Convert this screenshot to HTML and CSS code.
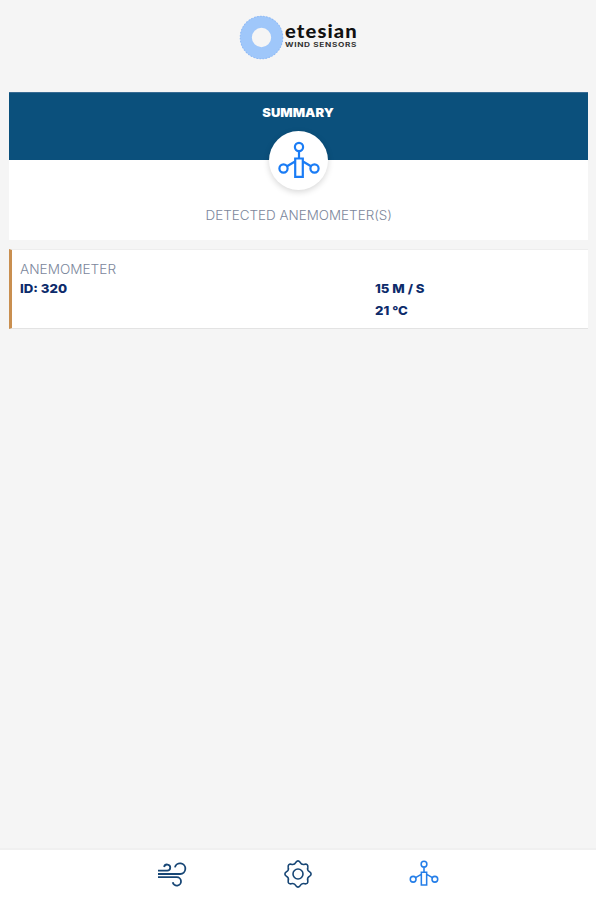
FILE: index.html
```html
<!DOCTYPE html>
<html lang="en">
<head>
<meta charset="utf-8">
<title>Etesian Wind Sensors</title>
<link rel="stylesheet" href="styles.css">
</head>
<body>
<svg class="defs" width="0" height="0" aria-hidden="true">
  <symbol id="anemometer" viewBox="0 0 42 40">
    <g fill="none" stroke="currentColor" stroke-width="2.2">
      <circle cx="21" cy="6" r="4.1"/>
      <circle cx="5.5" cy="27.5" r="4.1"/>
      <circle cx="36.5" cy="27.5" r="4.1"/>
      <path d="M21 10v7M17 20.5l-8 4.7M25 20.5l8 4.7M17.2 17.5h7.6v18.3h-7.6z"/>
    </g>
  </symbol>
</svg>
<div class="app">
  <header class="brand">
    <svg class="ring" viewBox="0 0 44 44"><circle cx="22" cy="22" r="15.2" fill="none" stroke="#9fc7fa" stroke-width="11.5"/><circle cx="22" cy="22" r="20.8" fill="none" stroke="#8fb9f4" stroke-width="1" stroke-dasharray="1.5 1.5"/></svg>
    <div class="wordmark">
      <span class="name">etesian</span>
      <span class="tagline">WIND SENSORS</span>
    </div>
  </header>
  <main>
    <section class="summary">
      <h1>SUMMARY</h1>
      <div class="badge"><svg><use href="#anemometer"/></svg></div>
      <p><span>DETECTED ANEMOMETER(S)</span></p>
    </section>
    <section class="sensor">
      <div class="identity">
        <span class="label">ANEMOMETER</span>
        <strong class="id">ID: 320</strong>
      </div>
      <div class="readings">
        <strong class="speed">15 M / S</strong>
        <strong class="temp">21 °C</strong>
      </div>
    </section>
  </main>
  <nav>
    <svg viewBox="0 0 30 28" fill="none" stroke="currentColor" stroke-width="1.8">
      <path d="M1 10.7h9.2a3.1 3.1 0 1 0-3.1-3.7M1 14h22.2a5.3 5.3 0 1 0-5.3-6.6M1 17.2h18.8a4.2 4.2 0 1 1-4.1 5.1"/>
    </svg>
    <svg viewBox="0 0 30 28" fill="none" stroke="currentColor" stroke-width="1.6" stroke-linejoin="round">
      <circle cx="15" cy="14" r="5"/>
      <path d="M12.9 2.3Q15 -.5 17.1 2.3Q18.7 5.2 21.8 4.2Q25.2 3.8 24.8 7.2Q23.8 10.3 26.7 11.9Q29.5 14 26.7 16.1Q23.8 17.7 24.8 20.8Q25.2 24.2 21.8 23.8Q18.7 22.8 17.1 25.7Q15 28.5 12.9 25.7Q11.3 22.8 8.2 23.8Q4.8 24.2 5.2 20.8Q6.2 17.7 3.3 16.1Q.5 14 3.3 11.9Q6.2 10.3 5.2 7.2Q4.8 3.8 8.2 4.2Q11.3 5.2 12.9 2.3Z"/>
    </svg>
    <svg class="active"><use href="#anemometer"/></svg>
  </nav>
</div>
</body>
</html>
```
FILE: styles.css
```css
* { box-sizing: border-box; }
body { margin: 0; background: #f5f5f5; font-family: Inter, "Open Sans", sans-serif; }
.defs { position: absolute; }
.app { height: 900px; display: flex; flex-direction: column; }
.brand { height: 92px; padding: 15px 0 0 239px; display: flex; align-items: flex-start; }
.ring { width: 45px; height: 45px; flex: none; }
.wordmark { display: flex; flex-direction: column; align-items: flex-start; padding: 6px 0 0 1px; white-space: nowrap; color: #111; }
.name { font: 900 18px/20px Lato, sans-serif; letter-spacing: 1px; transform: scaleX(1.12); transform-origin: left; }
.tagline { font: 700 6.5px/9px Inter, sans-serif; letter-spacing: .5px; color: #333; transform: scaleX(1.27); transform-origin: left; }
main { flex: 1; padding: 0 8px 0 9px; }
.summary { height: 148px; background: linear-gradient(#0b507c 67px, #fff 67px); border-top: 1px solid #386b93; display: flex; flex-direction: column; align-items: center; }
h1 { margin: 12px 0 0; color: #fff; font-size: 12px; line-height: 16px; font-weight: 900; transform: scaleX(1.08); }
.badge { width: 59px; height: 59px; margin-top: 10px; border-radius: 50%; background: #fff; box-shadow: 0 2px 6px rgba(0,0,0,.16); display: grid; place-items: center; color: #1a7cf5; }
.badge svg { width: 42px; height: 40px; }
p { margin: 17px 0 0; font-size: 12.5px; line-height: 18px; font-weight: 300; color: #7c879c; transform: scaleX(1.075); }
.sensor { height: 80px; margin-top: 9px; padding: 12px 0 0 8px; background: #fff; border-left: 3px solid #c98f50; border-top: 1px solid #ededed; border-bottom: 1px solid #e3e3e3; display: grid; grid-template-columns: 355px 1fr; }
.identity, .readings { display: flex; flex-direction: column; align-items: flex-start; }
.label { font-size: 12.5px; line-height: 16px; font-weight: 300; color: #7c879c; transform: scaleX(1.09); transform-origin: left; }
.id { margin-top: 3px; }
strong { font-size: 12px; line-height: 16px; font-weight: 800; color: #0d2b6b; transform: scaleX(1.1); transform-origin: left; }
.readings { padding-top: 19px; gap: 6px; }
nav { height: 52px; flex: none; background: #fff; border-top: 2px solid #f0f0f0; padding-top: 10px; display: flex; justify-content: center; gap: 96px; color: #174675; }
nav svg { width: 30px; height: 28px; }
nav .active { color: #247ee8; }
```
